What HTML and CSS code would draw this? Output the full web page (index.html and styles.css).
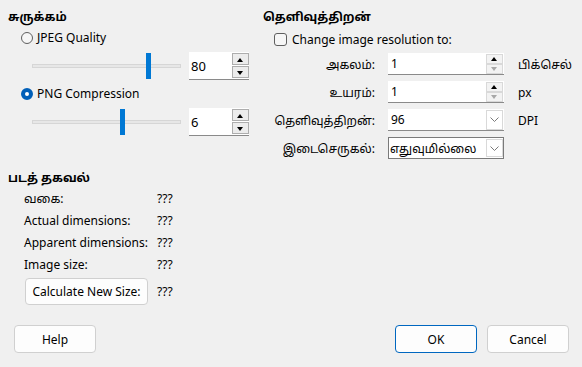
FILE: index.html
```html
<!DOCTYPE html>
<html lang="ta">
<head>
    <meta charset="UTF-8">
    <title>படத்தை ஏற்றுமதி செய்</title>
    <link rel="stylesheet" href="styles.css">
</head>
<body>
    <div class="top">
        <section class="group compress">
            <h2>சுருக்கம்</h2>
            <label class="radio"><span class="dot"></span>JPEG Quality</label>
            <div class="slider-row">
                <div class="slider">
                    <div class="track"></div>
                    <div class="thumb" style="left: 114px"></div>
                </div>
                <div class="spin">
                    <div class="spin-field">80</div>
                    <div class="spin-btns">
                        <span class="sbtn up"></span>
                        <span class="sbtn down"></span>
                    </div>
                </div>
            </div>
            <label class="radio checked"><span class="dot"></span>PNG Compression</label>
            <div class="slider-row">
                <div class="slider">
                    <div class="track"></div>
                    <div class="thumb" style="left: 88px"></div>
                </div>
                <div class="spin">
                    <div class="spin-field">6</div>
                    <div class="spin-btns">
                        <span class="sbtn up"></span>
                        <span class="sbtn down"></span>
                    </div>
                </div>
            </div>
        </section>

        <section class="group resolution">
            <h2>தெளிவுத்திறன்</h2>
            <label class="check"><span class="box"></span>Change image resolution to:</label>
            <div class="form">
                <span class="lbl">அகலம்:</span>
                <div class="field">
                    <span class="val">1</span>
                    <div class="mini-spin">
                        <span class="mbtn up"></span>
                        <span class="mbtn down"></span>
                    </div>
                </div>
                <span class="unit">பிக்செல்</span>

                <span class="lbl">உயரம்:</span>
                <div class="field">
                    <span class="val">1</span>
                    <div class="mini-spin">
                        <span class="mbtn up"></span>
                        <span class="mbtn down"></span>
                    </div>
                </div>
                <span class="unit">px</span>

                <span class="lbl">தெளிவுத்திறன்:</span>
                <div class="field combo">
                    <span class="val">96</span>
                    <span class="drop"><svg width="9" height="5" viewBox="0 0 9 5"><path d="M0.5 0.5 L4.5 4.5 L8.5 0.5" fill="none" stroke="#7a7a7a" stroke-width="1"/></svg></span>
                </div>
                <span class="unit">DPI</span>

                <span class="lbl">இடைசெருகல்:</span>
                <div class="field combo focus">
                    <span class="val">எதுவுமில்லை</span>
                    <span class="drop"><svg width="9" height="5" viewBox="0 0 9 5"><path d="M0.5 0.5 L4.5 4.5 L8.5 0.5" fill="none" stroke="#7a7a7a" stroke-width="1"/></svg></span>
                </div>
                <span class="unit"></span>
            </div>
        </section>
    </div>

    <section class="group info">
        <h2>படத் தகவல்</h2>
        <div class="info-grid">
            <span>வகை:</span><span>???</span>
            <span>Actual dimensions:</span><span>???</span>
            <span>Apparent dimensions:</span><span>???</span>
            <span>Image size:</span><span>???</span>
            <div class="btn-cell"><button class="btn calc">Calculate New Size:</button></div><span>???</span>
        </div>
    </section>

    <footer class="buttons">
        <button class="btn">Help</button>
        <div class="spacer"></div>
        <button class="btn default">OK</button>
        <button class="btn">Cancel</button>
    </footer>
</body>
</html>
```

FILE: styles.css
```css
*{
    margin: 0;
    padding: 0;
    box-sizing: border-box;
}

html{
    background-color: #f0f0f0;
}

body{
    width: 582px;
    height: 367px;
    font-family: "Noto Sans", "Noto Sans Tamil", "Lohit Tamil", sans-serif;
    font-size: 12px;
    color: #000;
    display: flex;
    flex-direction: column;
}

h2{
    font-size: 12px;
    font-weight: bold;
    height: 16px;
    line-height: 16px;
}

.top{
    display: flex;
    padding-top: 9px;
}

.group{
    padding-left: 8px;
}

.compress{
    width: 255px;
}

/* radio buttons */
.radio{
    display: flex;
    align-items: center;
    gap: 4px;
    height: 17px;
    margin-top: 4px;
    margin-left: 13px;
}

.radio + .slider-row{
    margin-top: 6px;
}

.slider-row + .radio{
    margin-top: 5px;
}

.dot{
    width: 12px;
    height: 12px;
    border-radius: 50%;
    border: 1px solid #5f5f5f;
    background-color: #f6f6f6;
}

.radio.checked .dot{
    border: 4px solid #005fb8;
    background-color: #fff;
}

/* sliders */
.slider-row{
    display: flex;
    align-items: center;
    height: 28px;
    margin-left: 24px;
}

.slider{
    position: relative;
    width: 149px;
    height: 28px;
}

.track{
    position: absolute;
    left: 0;
    right: 0;
    top: 12px;
    height: 4px;
    background-color: #e7e7e7;
    border: 1px solid #d6d6d6;
}

.thumb{
    position: absolute;
    top: 1px;
    width: 5px;
    height: 26px;
    background-color: #0078d4;
}

.spin{
    display: flex;
    margin-left: 8px;
    width: 60px;
    height: 28px;
    background-color: #fff;
    border-bottom: 1px solid #8a8a8a;
}

.spin-field{
    flex: 1;
    display: flex;
    align-items: center;
    padding-left: 2px;
    font-size: 13px;
}

.spin-btns{
    display: flex;
    flex-direction: column;
    gap: 1px;
    padding: 1px 0 1px 0;
    width: 17px;
}

.sbtn{
    flex: 1;
    border: 1px solid #adadad;
    background-color: #ececec;
    position: relative;
}

.sbtn::after{
    content: "";
    position: absolute;
    left: 4px;
    top: 4px;
    border-left: 3.5px solid transparent;
    border-right: 3.5px solid transparent;
}

.sbtn.up::after{
    border-bottom: 4px solid #000;
}

.sbtn.down::after{
    border-top: 4px solid #000;
}

/* resolution form */
.check{
    display: flex;
    align-items: center;
    gap: 5px;
    height: 16px;
    margin-top: 6px;
    margin-left: 11px;
}

.box{
    width: 13px;
    height: 13px;
    border: 1px solid #5f5f5f;
    border-radius: 3px;
    background-color: #f6f6f6;
}

.form{
    display: grid;
    grid-template-columns: 112px 116px auto;
    grid-auto-rows: 22px;
    column-gap: 13px;
    row-gap: 6px;
    margin-top: 6px;
    align-items: center;
}

.lbl{
    text-align: right;
}

.unit{
    margin-left: 1px;
}

.field{
    display: flex;
    align-items: center;
    height: 22px;
    background-color: #fff;
    border-bottom: 1px solid #8a8a8a;
}

.field .val{
    flex: 1;
    padding-left: 3px;
}

.combo.focus{
    border: 1px solid #7a7a7a;
}

.combo.focus .val{
    padding-left: 1px;
}

.mini-spin{
    display: flex;
    flex-direction: column;
    width: 17px;
    height: 20px;
    margin-right: 1px;
}

.mbtn{
    flex: 1;
    border: 1px solid #d9d9d9;
    background-color: #f3f3f3;
    position: relative;
}

.mbtn::after{
    content: "";
    position: absolute;
    left: 4px;
    top: 2px;
    border-left: 3.5px solid transparent;
    border-right: 3.5px solid transparent;
}

.mbtn.up::after{
    border-bottom: 4px solid #000;
}

.mbtn.down::after{
    border-top: 4px solid #a8a8a8;
}

.drop{
    display: flex;
    align-items: center;
    justify-content: center;
    width: 17px;
    height: 20px;
    margin-right: 1px;
    border: 1px solid #d9d9d9;
}

.combo.focus .drop{
    height: 18px;
    margin-right: 0;
}

/* image info */
.info{
    margin-top: 11px;
}

.info-grid{
    display: grid;
    grid-template-columns: 133px auto;
    grid-template-rows: repeat(4, 22px) 30px;
    align-items: center;
    margin-left: 16px;
    margin-top: 1px;
}

.info-grid > :nth-last-child(-n+2){
    align-self: end;
    height: 27px;
    display: flex;
    align-items: center;
}

.btn{
    font-family: inherit;
    font-size: 12px;
    color: #000;
    background-color: #fdfdfd;
    border: 1px solid #d0d0d0;
    border-radius: 4px;
    width: 82px;
    height: 28px;
}

.btn.calc{
    width: 123px;
    height: 27px;
    margin-left: 1px;
}

.btn.default{
    border-color: #0067c0;
}

.buttons{
    margin-top: auto;
    display: flex;
    gap: 10px;
    padding: 0 13px 14px 14px;
}

.spacer{
    flex: 1;
}
```
